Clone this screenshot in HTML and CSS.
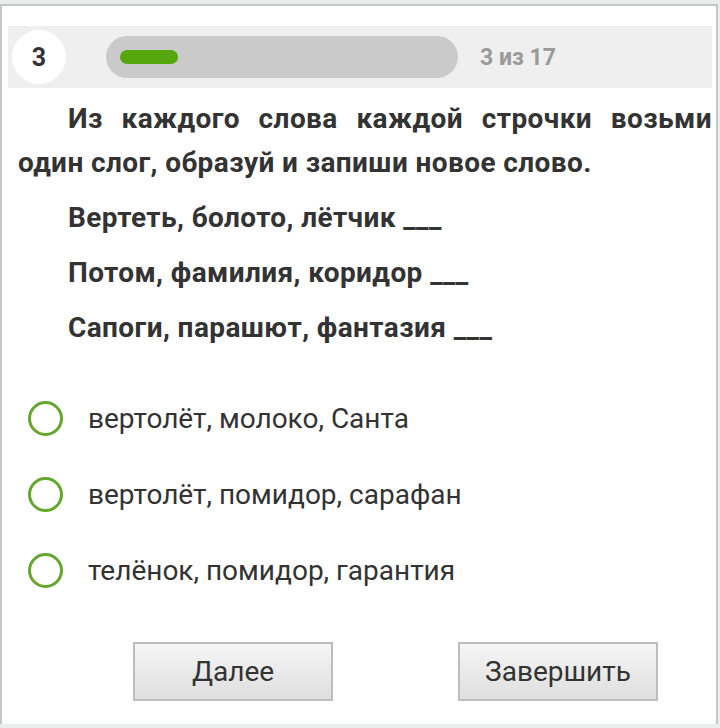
FILE: index.html
```html
<!DOCTYPE html>
<html lang="ru">
<head>
  <meta charset="UTF-8">
  <meta name="viewport" content="width=device-width, initial-scale=1.0">
  <title>Тест</title>
  <link rel="stylesheet" href="styles.css">
</head>
<body>
  <div class="frame">
    <div class="test-header">
      <div class="q-number">3</div>
      <div class="progress"><div class="progress-fill"></div></div>
      <div class="q-count">3 из 17</div>
    </div>

    <div class="question">
      <p class="q-main">Из каждого слова каждой строчки возьми один слог, образуй и запиши новое слово.</p>
      <p>Вертеть, болото, лётчик ___</p>
      <p>Потом, фамилия, коридор ___</p>
      <p>Сапоги, парашют, фантазия ___</p>
    </div>

    <div class="answers">
      <label class="answer"><span class="radio"></span>вертолёт, молоко, Санта</label>
      <label class="answer"><span class="radio"></span>вертолёт, помидор, сарафан</label>
      <label class="answer"><span class="radio"></span>телёнок, помидор, гарантия</label>
    </div>

    <div class="buttons">
      <button class="btn">Далее</button>
      <button class="btn">Завершить</button>
    </div>
  </div>
</body>
</html>
```

FILE: styles.css
```css
body {
  margin: 0;
  background-color: #eceeee;
  font-family: Roboto, "Noto Sans", sans-serif;
  color: #333;
}
.frame {
  margin-top: 4px;
  width: 714px;
  height: 718px;
  background: #fff;
  border: 2px solid #c6c6c6;
  border-bottom: none;
  overflow: hidden;
}
.test-header {
  display: flex;
  align-items: center;
  margin: 20px 4px 0 6px;
  height: 62px;
  background-color: #efefef;
}
.q-number {
  width: 54px;
  height: 54px;
  margin-left: 4px;
  border-radius: 50%;
  background: #fff;
  display: flex;
  align-items: center;
  justify-content: center;
  font-size: 25px;
  font-weight: bold;
  color: #333;
}
.progress {
  width: 352px;
  height: 42px;
  margin-left: 40px;
  border-radius: 21px;
  background-color: #cacaca;
  display: flex;
  align-items: center;
}
.progress-fill {
  width: 58px;
  height: 14px;
  margin-left: 14px;
  border-radius: 7px;
  background-color: #55a70b;
}
.q-count {
  margin-left: 22px;
  font-size: 23px;
  font-weight: bold;
  color: #9a9a9a;
}
.question {
  margin-top: 9px;
  padding: 0 4px 0 16px;
  font-weight: bold;
  font-size: 28px;
  line-height: 44px;
  letter-spacing: 0.4px;
}
.question p {
  margin: 0 0 11px;
  text-indent: 50px;
}
.q-main {
  text-align: justify;
}
.answers {
  margin-top: 30px;
}
.answer {
  display: flex;
  align-items: center;
  height: 76px;
  padding-left: 26px;
  font-size: 28px;
}
.radio {
  width: 29px;
  height: 29px;
  border: 3px solid #64a62e;
  border-radius: 50%;
  margin-right: 25px;
}
.buttons {
  display: flex;
  gap: 125px;
  margin-top: 34px;
  padding-left: 131px;
}
.btn {
  width: 200px;
  height: 59px;
  border: 2px solid #bdbdbd;
  background: linear-gradient(#f6f6f6, #dedede);
  font-family: Roboto, sans-serif;
  font-size: 28px;
  color: #333;
  padding: 0;
}
```
